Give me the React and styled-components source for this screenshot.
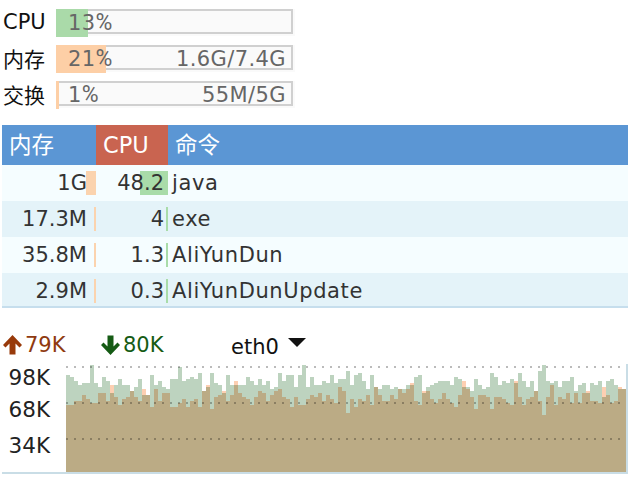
import React from 'react';
import styled, { createGlobalStyle } from 'styled-components';

const GlobalStyle = createGlobalStyle`
	html, body {
		margin: 0;
		background: #fff;
		font-family: 'DejaVu Sans', 'Noto Sans CJK SC', sans-serif;
	}
`;

const Page = styled.div`
	width: 636px;
	height: 488px;
	padding-top: 9px;
	box-sizing: border-box;
	overflow: hidden;
`;

const Meters = styled.div`
	display: flex;
	flex-direction: column;
	gap: 9px;
`;
const MeterRow = styled.div`
	display: flex;
	align-items: center;
	height: 27px;
	padding-left: 3px;
`;
const MeterLabel = styled.div`
	width: 53px;
	margin-top: -1px;
	font-size: 21px;
	color: #111;
`;
const MeterBox = styled.div`
	position: relative;
	display: flex;
	justify-content: space-between;
	align-items: center;
	width: 239px;
	height: 27px;
	box-sizing: border-box;
	padding: 0 9px 0 12px;
	background: #fafafa;
	font-size: 21px;
	letter-spacing: 0.4px;
	color: #666;
	&::before {
		content: '';
		position: absolute;
		left: 0;
		top: 0;
		right: 2px;
		bottom: 2px;
		border: 2px solid #d0d0d0;
		border-left: 0;
	}
`;
const MeterFill = styled.div`
	position: absolute;
	left: 0;
	top: 0;
	height: 28px;
	background: ${p => p.$color};
`;
const MeterText = styled.span`
	position: relative;
`;
const PercentSign = styled.span`
	font-family: Roboto, sans-serif;
	font-size: 23px;
	letter-spacing: 0;
`;

const Table = styled.div`
	margin: 17px 8px 0 2px;
	border-bottom: 2px solid #c6deed;
	box-shadow: inset 1px 0 0 #c6deed;
`;
const HeadRow = styled.div`
	display: grid;
	grid-template-columns: 94px 72px 1fr;
	height: 40px;
	background: #5b96d4;
	color: #fff;
	font-size: 22.5px;
	line-height: 40px;
`;
const HeadCell = styled.div`
	padding-left: ${p => p.$pad}px;
	background: ${p => p.$active ? '#c96450' : 'transparent'};
`;
const Row = styled.div`
	display: grid;
	grid-template-columns: 94px 72px 1fr;
	height: ${p => p.$last ? 33 : 36}px;
	background: ${p => p.$even ? '#e4f3f9' : '#f5fdff'};
	font-size: 21px;
	color: #333;
	line-height: 36px;
`;
const NumCell = styled.div`
	position: relative;
	text-align: right;
	padding-right: ${p => p.$pad}px;
`;
const CellBar = styled.div`
	position: absolute;
	right: 0;
	top: 6px;
	height: 24px;
	background: ${p => p.$color};
`;
const CellText = styled.span`
	position: relative;
`;
const CmdCell = styled.div`
	padding-left: 4px;
	letter-spacing: 0.6px;
`;

const NetHead = styled.div`
	display: flex;
	align-items: center;
	height: 24px;
	margin-top: 25px;
	padding-left: 3px;
	font-size: 21px;
`;
const Speed = styled.div`
	display: flex;
	align-items: center;
	gap: 3px;
	width: ${p => p.$width}px;
	color: ${p => p.$color};
`;
const Iface = styled.div`
	display: flex;
	align-items: center;
	gap: 9px;
	padding-top: 3px;
	color: #111;
`;
const Caret = styled.span`
	width: 0;
	height: 0;
	margin-top: -9px;
	border-left: 9.5px solid transparent;
	border-right: 9.5px solid transparent;
	border-top: 9px solid #111;
`;

const NetBody = styled.div`
	display: flex;
	margin: 3px 8px 0 2px;
	border-bottom: 2px solid #c9dde6;
`;
const Axis = styled.div`
	display: flex;
	flex-direction: column;
	align-items: flex-end;
	width: 48px;
	margin-right: 16px;
	padding-top: 6px;
	font-size: 21.5px;
	line-height: 24px;
	color: #222;
`;
const AxisLabel = styled.div`
	margin-top: ${p => p.$gap}px;
`;
const Chart = styled.svg`
	display: block;
	isolation: isolate;
	background: #fff;
	shape-rendering: crispEdges;
`;
const Dots = styled.line`
	stroke: #bbb;
	stroke-width: 2;
	stroke-dasharray: 2 6;
`;
const Area = styled.path`
	fill: ${p => p.$color};
	mix-blend-mode: multiply;
`;
const ChartEdge = styled.rect`
	fill: #c9dde6;
`;

const meters = [
	{ label: 'CPU', percent: '13', used: '', width: 32, color: '#aadaa9' },
	{ label: '内存', percent: '21', used: '1.6G/7.4G', width: 50, color: '#fdcfa6' },
	{ label: '交换', percent: '1', used: '55M/5G', width: 3, color: '#fdcfa6' },
];

const procs = [
	{ mem: '1G', memBar: 10, cpu: '48.2', cpuBar: 28, cmd: 'java' },
	{ mem: '17.3M', memBar: 2, cpu: '4', cpuBar: 2, cmd: 'exe' },
	{ mem: '35.8M', memBar: 2, cpu: '1.3', cpuBar: 2, cmd: 'AliYunDun' },
	{ mem: '2.9M', memBar: 2, cpu: '0.3', cpuBar: 2, cmd: 'AliYunDunUpdate' },
];

// top of each 4px column, in px from the top of the chart
const download = [
	15, 17, 21, 25, 23, 23, 5, 23, 27, 17, 21, 33, 25, 19, 25, 25, 31, 27, 19, 35, 35, 15, 25, 21, 27, 29, 19, 19,
	7, 21, 19, 17, 19, 13, 31, 27, 13, 23, 25, 33, 15, 25, 25, 25, 25, 17, 21, 25, 19, 25, 21, 29, 27, 13, 21, 15,
	15, 27, 15, 5, 27, 17, 25, 25, 21, 23, 15, 23, 19, 19, 11, 25, 15, 13, 21, 29, 15, 27, 29, 25, 25, 29, 27, 29,
	29, 25, 25, 17, 15, 33, 27, 25, 23, 21, 21, 21, 25, 17, 19, 27, 27, 31, 19, 25, 29, 27, 13, 17, 25, 21, 23, 19,
	23, 13, 21, 27, 21, 31, 11, 5, 21, 23, 21, 27, 21, 21, 17, 31, 25, 23, 33, 23, 25, 21, 37, 21, 19, 25, 29, 29,
];
const upload = [
	45, 45, 41, 41, 35, 39, 43, 43, 33, 33, 41, 25, 37, 45, 39, 37, 31, 37, 41, 29, 35, 47, 29, 41, 33, 33, 47, 47,
	43, 39, 47, 41, 39, 47, 31, 25, 49, 37, 35, 31, 41, 35, 21, 33, 37, 39, 45, 37, 31, 33, 41, 35, 31, 29, 37, 39,
	47, 37, 45, 45, 39, 35, 37, 33, 41, 35, 39, 43, 27, 31, 53, 39, 47, 39, 41, 35, 45, 27, 35, 41, 41, 35, 39, 29,
	33, 29, 23, 41, 45, 31, 31, 39, 43, 39, 33, 39, 43, 47, 35, 21, 29, 37, 49, 35, 35, 37, 49, 37, 37, 39, 43, 45,
	21, 37, 45, 39, 37, 31, 41, 55, 37, 25, 45, 37, 39, 33, 43, 33, 43, 33, 31, 41, 41, 43, 27, 35, 43, 41, 27, 29,
];

const CHART_H = 112;
const columns = tops =>
	tops.map((top, i) => `M${i * 4} ${CHART_H}V${top}h4V${CHART_H}z`).join('');

const Arrow = ({ color, down }) => (
	<svg width="19" height="20" viewBox="0 0 19 20" style={{ transform: down ? 'scaleY(-1)' : undefined }}>
		<path
			d="M9.5 0 19 10 16.5 12.5 12.5 8.5V19.5H6.5V8.5L2.5 12.5 0 10Z"
			fill={color}
		/>
	</svg>
);

const App = () => {
	return (
		<Page>
			<GlobalStyle />
			<Meters>
				{meters.map(m => (
					<MeterRow key={m.label}>
						<MeterLabel>{m.label}</MeterLabel>
						<MeterBox>
							<MeterFill $color={m.color} style={{ width: m.width }} />
							<MeterText>{m.percent}<PercentSign>%</PercentSign></MeterText>
							<MeterText>{m.used}</MeterText>
						</MeterBox>
					</MeterRow>
				))}
			</Meters>

			<Table>
				<HeadRow>
					<HeadCell $pad={7}>内存</HeadCell>
					<HeadCell $pad={7} $active>CPU</HeadCell>
					<HeadCell $pad={7}>命令</HeadCell>
				</HeadRow>
				{procs.map((p, i) => (
					<Row key={p.cmd} $even={i % 2 === 1} $last={i === procs.length - 1}>
						<NumCell $pad={9}>
							<CellBar $color="#fbd3ae" style={{ width: p.memBar }} />
							<CellText>{p.mem}</CellText>
						</NumCell>
						<NumCell $pad={4}>
							<CellBar $color="#a9dca9" style={{ width: p.cpuBar }} />
							<CellText>{p.cpu}</CellText>
						</NumCell>
						<CmdCell>{p.cmd}</CmdCell>
					</Row>
				))}
			</Table>

			<NetHead>
				<Speed $width={98} $color="#8f3a10">
					<Arrow color="#983a0a" />
					79K
				</Speed>
				<Speed $width={130} $color="#155b14">
					<Arrow color="#155b14" down />
					80K
				</Speed>
				<Iface>
					eth0
					<Caret />
				</Iface>
			</NetHead>

			<NetBody>
				<Axis>
					<AxisLabel $gap={0}>98K</AxisLabel>
					<AxisLabel $gap={8}>68K</AxisLabel>
					<AxisLabel $gap={12}>34K</AxisLabel>
				</Axis>
				<Chart width="562" height={CHART_H} viewBox={`0 0 562 ${CHART_H}`}>
					<Dots x1="0" x2="562" y1="7" y2="7" />
					<Dots x1="0" x2="562" y1="43" y2="43" />
					<Dots x1="0" x2="562" y1="79" y2="79" />
					<Area $color="#bdd3bf" d={columns(download)} />
					<Area $color="#fdcfb2" d={columns(upload)} />
					<ChartEdge x="560" y="4" width="2" height={CHART_H - 4} />
				</Chart>
			</NetBody>
		</Page>
	);
};

export default App;
